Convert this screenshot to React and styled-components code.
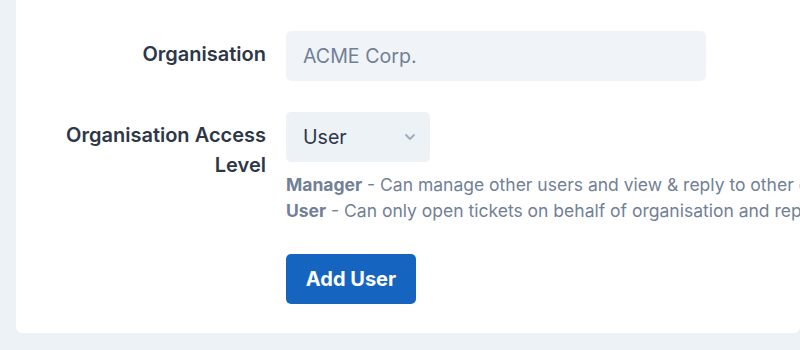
import React from 'react';
import styled, { createGlobalStyle } from 'styled-components';

const GlobalStyle = createGlobalStyle`
  html, body {
    margin: 0;
    padding: 0;
    background: #edf2f7;
    font-family: Inter, "Noto Sans", sans-serif;
  }
`;

const Page = styled.div`
  padding: 0 0 17px 16px;
  height: 350px;
  box-sizing: border-box;
  display: flex;
  flex-direction: column;
  justify-content: flex-end;
  overflow: hidden;
`;

const Card = styled.div`
  background: #fff;
  border-radius: 0 0 6px 6px;
  padding: 31px 0 29px 0;
`;

const Form = styled.div`
  display: grid;
  grid-template-columns: 250px 1fr;
  column-gap: 20px;
  row-gap: 31px;
`;

const Label = styled.label`
  text-align: right;
  font-size: 20px;
  font-weight: 600;
  line-height: 30px;
  padding-top: 8px;
  color: #2d3748;
  padding-left: 30px;
`;

const Field = styled.div`
  display: flex;
  flex-direction: column;
  align-items: flex-start;
`;

const TextInput = styled.input`
  width: 420px;
  height: 50px;
  box-sizing: border-box;
  border: none;
  border-radius: 5px;
  background: #f0f4f8;
  padding: 0 17px;
  font-family: inherit;
  font-size: 19.6px;
  color: #2d3748;
  outline: none;
  &::placeholder {
    color: #718096;
  }
`;

const SelectBox = styled.div`
  width: 144px;
  height: 50px;
  box-sizing: border-box;
  border-radius: 5px;
  background: #edf2f7;
  padding: 0 14px 0 17px;
  display: flex;
  align-items: center;
  justify-content: space-between;
  font-size: 19.6px;
  color: #2d3748;
`;

const Help = styled.div`
  margin-top: 10px;
  font-size: 17.5px;
  line-height: 26px;
  color: #718096;
  white-space: nowrap;
  b {
    font-weight: 700;
  }
`;

const Button = styled.button`
  width: 130px;
  height: 50px;
  margin-top: -1px;
  border: none;
  border-radius: 5px;
  background: #1565c0;
  color: #fff;
  font-family: inherit;
  font-size: 20px;
  font-weight: 700;
`;

const Chevron = () => (
  <svg width="12" height="8" viewBox="0 0 12 8" fill="none">
    <path d="M2 2l4 4 4-4" stroke="#a0aec0" strokeWidth="2" strokeLinecap="round" strokeLinejoin="round" />
  </svg>
);

export default function App() {
  return (
    <>
      <GlobalStyle />
      <Page>
        <Card>
          <Form>
            <Label>Organisation</Label>
            <Field>
              <TextInput placeholder="ACME Corp." />
            </Field>

            <Label>Organisation Access Level</Label>
            <Field>
              <SelectBox>
                <span>User</span>
                <Chevron />
              </SelectBox>
              <Help>
                <b>Manager</b> - Can manage other users and view &amp; reply to other organisation tickets
                <br />
                <b>User</b> - Can only open tickets on behalf of organisation and reply to their own tickets
              </Help>
            </Field>

            <div />
            <Field>
              <Button>Add User</Button>
            </Field>
          </Form>
        </Card>
      </Page>
    </>
  );
}
